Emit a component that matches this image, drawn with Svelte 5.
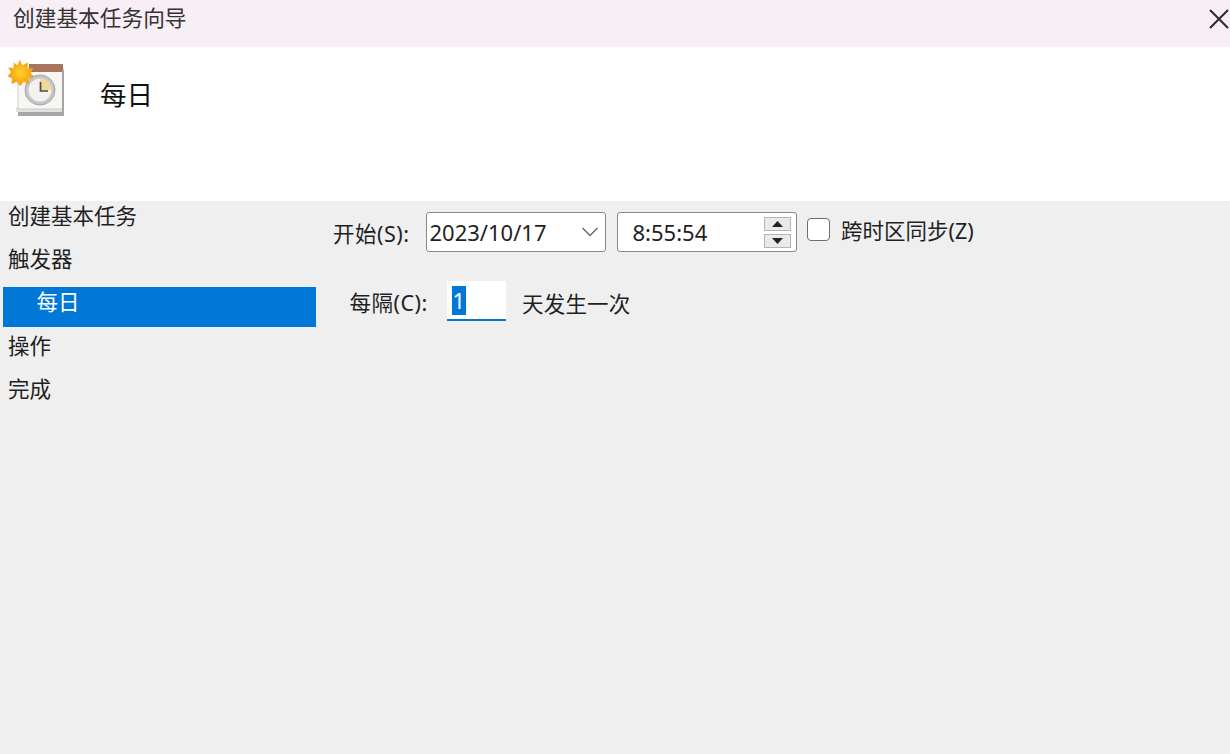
<script>
	const steps = [
		{ label: '创建基本任务' },
		{ label: '触发器' },
		{ label: '每日', active: true },
		{ label: '操作' },
		{ label: '完成' }
	];
</script>

<div class="wizard">
	<header class="titlebar">
		<span class="title">创建基本任务向导</span>
		<button class="close" aria-label="关闭">
			<svg width="20" height="20" viewBox="0 0 20 20"><path d="M1 1 L19 19 M19 1 L1 19" stroke="#2b2b2b" stroke-width="2" fill="none" /></svg>
		</button>
	</header>

	<section class="banner">
		<svg class="task-icon" width="60" height="60" viewBox="0 0 60 60" aria-hidden="true">
			<defs>
				<radialGradient id="sun" cx="0.5" cy="0.5" r="0.5">
					<stop offset="0" stop-color="#ffd22e" />
					<stop offset="1" stop-color="#f59a0c" />
				</radialGradient>
			</defs>
			<rect x="11" y="49" width="46" height="8" fill="#a6a6a6" />
			<rect x="9" y="48" width="46" height="5" fill="#e2e2e2" />
			<rect x="11" y="8" width="45" height="42" fill="#f8f6f2" stroke="#d0cdc7" />
			<rect x="22" y="5" width="34" height="8" fill="#a9745c" />
			<rect x="55" y="11" width="2" height="46" fill="#a5a5a5" />
			<circle cx="33" cy="31" r="15" fill="#c4c7ca" stroke="#a2a5a8" />
			<circle cx="33" cy="31" r="11.5" fill="#f3f2ef" />
			<path d="M33 31 V19.5 A11.5 11.5 0 0 1 44.5 31 Z" fill="#f3d998" />
			<path d="M33.5 23 V32 H41" stroke="#4b4b4b" stroke-width="1.7" fill="none" />
			<path transform="translate(-0.5 -1.5) scale(1.1)" d="M12 2 L14.5 7 L19.5 4.5 L19 10 L24.5 9.5 L22 14 L25 17.5 L20 19 L20.5 24 L15.5 22 L12.5 26 L9.5 22 L4.5 24 L5 19 L1 17 L4 13.5 L1.5 9 L6.5 9.5 L6.5 4.5 L10 7 Z" fill="url(#sun)" />
		</svg>
		<h1>每日</h1>
	</section>

	<main class="content">
		<nav class="steps">
			{#each steps as step}
				<div class="step" class:active={step.active}>{step.label}</div>
			{/each}
		</nav>

		<div class="form">
			<div class="row start">
				<span class="label">开始(S):</span>
				<div class="field date">
					<span>2023/10/17</span>
					<svg width="18" height="10" viewBox="0 0 18 10"><path d="M1.5 1 L9 8.5 L16.5 1" stroke="#6a6a6a" stroke-width="1.5" fill="none" /></svg>
				</div>
				<div class="field time">
					<span>8:55:54</span>
					<div class="spin">
						<div class="spin-btn"><svg width="11" height="6" viewBox="0 0 11 6"><path d="M5.5 0 L11 6 H0 Z" fill="#222" /></svg></div>
						<div class="spin-btn"><svg width="11" height="6" viewBox="0 0 11 6"><path d="M0 0 H11 L5.5 6 Z" fill="#222" /></svg></div>
					</div>
				</div>
				<label class="sync">
					<span class="check"></span>
					<span>跨时区同步(Z)</span>
				</label>
			</div>

			<div class="row repeat">
				<span class="label">每隔(C):</span>
				<div class="count"><span class="sel">1</span></div>
				<span class="unit">天发生一次</span>
			</div>
		</div>
	</main>
</div>

<style>
	:global(body) {
		margin: 0;
	}

	.wizard {
		width: 1230px;
		height: 754px;
		display: flex;
		flex-direction: column;
		overflow: hidden;
		background: #efefef;
		color: #1f1f1f;
		font-family: "Noto Sans", "Noto Sans CJK SC", sans-serif;
		font-size: 21.5px;
	}

	.titlebar {
		height: 47px;
		flex: none;
		display: flex;
		align-items: center;
		justify-content: space-between;
		padding: 0 1px 12px 13px;
		box-sizing: border-box;
		background: #f8eef5;
	}

	.title {
		color: #333;
		font-size: 21.7px;
		line-height: 35px;
	}

	.close {
		display: flex;
		border: 0;
		padding: 0;
		background: none;
		margin-top: 3px;
	}

	.banner {
		height: 154px;
		flex: none;
		display: flex;
		align-items: flex-start;
		background: #fff;
	}

	.task-icon {
		margin: 12px 0 0 7px;
	}

	.banner h1 {
		margin: 26px 0 0 33px;
		font-size: 26.5px;
		font-weight: 400;
		line-height: 44px;
		color: #111;
	}

	.content {
		flex: 1;
		display: flex;
	}

	.steps {
		width: 313.5px;
		margin-left: 2.5px;
		flex: none;
	}

	.step {
		height: 43.3px;
		line-height: 29px;
		padding-left: 5.5px;
		box-sizing: border-box;
	}

	.step:nth-child(2) {
		height: 42.3px;
	}

	.step.active {
		height: 40px;
		margin: 0 0 4.3px;
		padding: 0 0 0 34px;
		line-height: 30px;
		background: #0078d7;
		color: #fff;
	}

	.form {
		flex: 1;
		padding: 10px 0 0 17px;
	}

	.row {
		display: flex;
		align-items: center;
	}

	.start {
		height: 42px;
	}

	.label {
		letter-spacing: 0.5px;
	}

	.start .label {
		width: 92.5px;
		flex: none;
	}

	.field {
		height: 40.5px;
		box-sizing: border-box;
		display: flex;
		align-items: center;
		justify-content: space-between;
		background: #fff;
		border: 1.5px solid #8a8a8a;
		border-radius: 3px;
		font-size: 22px;
	}

	.date {
		width: 180px;
		padding: 0 6px 0 3px;
		margin-right: 11px;
	}

	.time {
		width: 180px;
		padding: 0 5px 0 15px;
		margin-right: 10.5px;
	}

	.spin {
		display: flex;
		flex-direction: column;
		gap: 3px;
	}

	.spin-btn {
		width: 27px;
		height: 14px;
		display: flex;
		align-items: center;
		justify-content: center;
		background: #eaeaea;
		border: 1px solid #b5b5b5;
		box-sizing: border-box;
	}

	.sync {
		display: flex;
		align-items: center;
		gap: 11px;
		margin-bottom: 5px;
	}

	.check {
		width: 23px;
		height: 23px;
		box-sizing: border-box;
		background: #fff;
		border: 1.5px solid #6e6e6e;
		border-radius: 4px;
	}

	.repeat {
		margin-top: 28px;
		height: 40px;
		padding-left: 16.5px;
	}

	.repeat .label {
		width: 97px;
		flex: none;
		margin-top: 1px;
	}

	.unit {
		margin-top: 2px;
		letter-spacing: 0.2px;
	}

	.count {
		width: 59.5px;
		height: 40px;
		margin-right: 16px;
		padding: 5px 0 0 5px;
		box-sizing: border-box;
		background: #fff;
		border-bottom: 2px solid #0078d7;
		line-height: 29px;
		font-size: 22px;
	}

	.sel {
		display: inline-block;
		height: 29px;
		padding: 0 1px;
		background: #0078d7;
		color: #fff;
	}
</style>
